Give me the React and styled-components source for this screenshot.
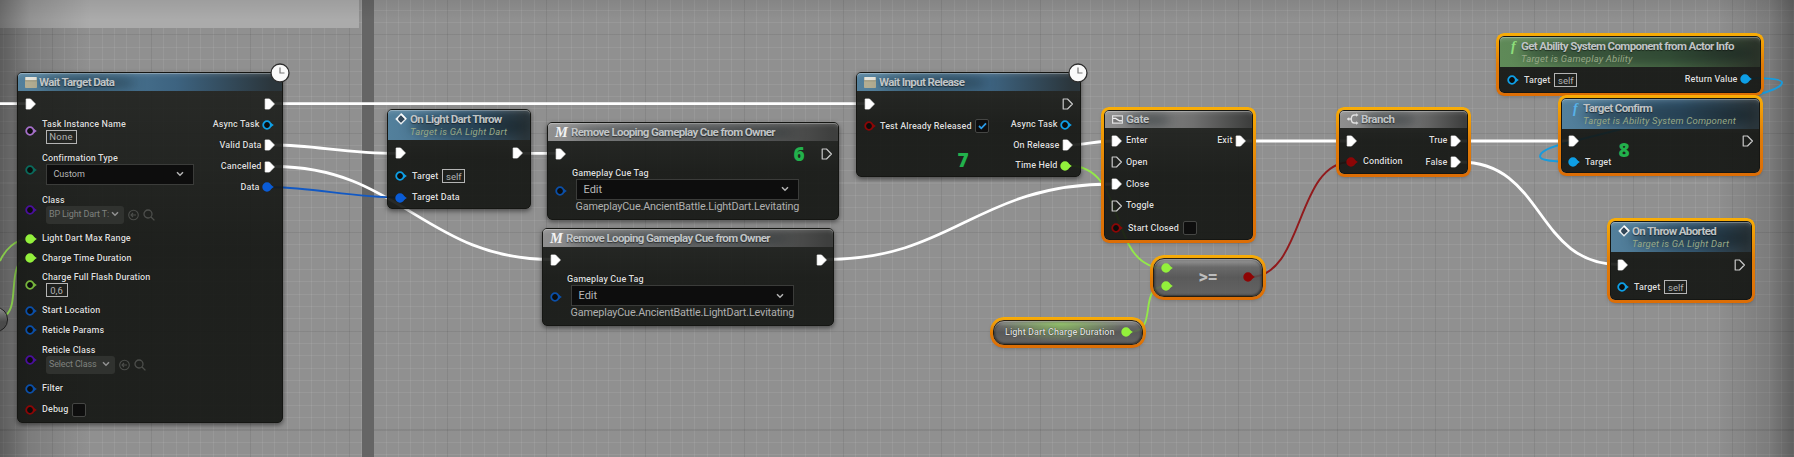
import React from "react";
import styled, { createGlobalStyle, css } from "styled-components";

const Global = createGlobalStyle`
  * { box-sizing: border-box; }
  body { margin: 0; background: #8e8e8e; overflow: hidden; }
`;

const C = {
  object: "#0e9fe6",
  name: "#a56fc9",
  enumeration: "#0a6a5c",
  klass: "#4a0f9c",
  float: "#93f03c",
  struct: "#0b4fa8",
  data: "#0a5cd6",
  bool: "#8c0606",
};

/* ---------- canvas ---------- */

const Canvas = styled.main`
  position: relative;
  width: 1794px;
  height: 457px;
  overflow: hidden;
  font-family: Roboto, "Liberation Sans", sans-serif;
  color: #dcdcdc;
  background-color: #909090;
  background-image:
    repeating-linear-gradient(90deg, rgba(60, 60, 60, 0.2) 0 1px, transparent 1px 98.8px),
    repeating-linear-gradient(180deg, rgba(60, 60, 60, 0.2) 0 1px, transparent 1px 98.8px),
    repeating-linear-gradient(90deg, rgba(255, 255, 255, 0.075) 0 1px, transparent 1px 12.35px),
    repeating-linear-gradient(180deg, rgba(255, 255, 255, 0.075) 0 1px, transparent 1px 12.35px);
  background-position: -46.7px -64.5px;
  background-size: 1900px 600px;
`;

const CommentBar = styled.div`
  position: absolute;
  left: 0;
  top: 0;
  width: 358.5px;
  height: 28px;
  background: #ababab;
`;

const CommentEdge = styled.div`
  position: absolute;
  left: 362px;
  top: 0;
  width: 12px;
  height: 100%;
  background: #656565;
`;

const Vignette = styled.div`
  position: absolute;
  inset: 0;
  background:
    linear-gradient(90deg, rgba(0, 0, 0, 0.36), rgba(0, 0, 0, 0.14) 30px, rgba(0, 0, 0, 0) 90px),
    linear-gradient(270deg, rgba(0, 0, 0, 0.34), rgba(0, 0, 0, 0.14) 25px, rgba(0, 0, 0, 0) 80px),
    linear-gradient(180deg, rgba(0, 0, 0, 0.08), rgba(0, 0, 0, 0) 20px);
`;

const Wires = styled.svg`
  position: absolute;
  inset: 0;
  fill: none;
  stroke-width: 2.8;
  stroke: #fff;
`;

/* ---------- nodes ---------- */

const ring = css`
  &::before {
    content: "";
    position: absolute;
    inset: -4px;
    padding: 3px;
    border-radius: ${(p) => (p.$round || 5) + 3}px;
    background: linear-gradient(#f9ae06, #e07c08 50%, #dc6d05);
    mask: linear-gradient(#000 0 0) content-box exclude, linear-gradient(#000 0 0);
    pointer-events: none;
  }
`;

const Node = styled.section`
  position: absolute;
  left: ${(p) => p.$x}px;
  top: ${(p) => p.$y}px;
  width: ${(p) => p.$w}px;
  height: ${(p) => p.$h}px;
  border: 1px solid #151613;
  border-radius: ${(p) => p.$round || 5}px;
  background: linear-gradient(rgba(28, 30, 27, 0.89), rgba(19, 21, 18, 0.91) 50%);
  box-shadow: 0 2px 5px rgba(0, 0, 0, 0.5);
  ${(p) => p.$selected && ring}
`;

const tones = {
  blue: "linear-gradient(90deg, #53809c, #4a7592 35%, #3d6380 60%, #2b363c 96%)",
  grey: "linear-gradient(90deg, #8f8f8f, #7c7c7c 40%, #707070 60%, #3e3f3e 98%)",
  green: "linear-gradient(90deg, #5f8a58, #587d51 45%, #4d7048 65%, #2c352a 98%)",
};

const Header = styled.header`
  position: relative;
  display: flex;
  align-items: flex-start;
  height: ${(p) => p.$h}px;
  padding: ${(p) => p.$top ?? 2}px 0 0 7px;
  border-radius: 4px 4px 0 0;
  background: ${(p) => tones[p.$tone]};
  box-shadow: inset 0 1px 0 rgba(255, 255, 255, 0.28), inset 0 5px 4px -3px rgba(255, 255, 255, 0.16);
  overflow: hidden;
`;

const HeaderIcon = styled.span`
  position: relative;
  display: flex;
  flex: none;
  width: ${(p) => p.$w || 14}px;
  height: 14px;
  align-items: center;
`;

const Heading = styled.div`
  position: relative;
  display: flex;
  flex-direction: column;
  isolation: isolate;
  &::before {
    content: "";
    position: absolute;
    z-index: -1;
    inset: 1px -22px -1px 0;
    border-radius: 50%;
    background: rgba(8, 18, 24, 0.42);
    filter: blur(6px);
  }
`;

const Title = styled.h2`
  margin: 0;
  font-size: 11.5px;
  line-height: 14px;
  font-weight: 700;
  letter-spacing: ${(p) => p.$ls ?? -0.62}px;
  color: #c0c4c6;
  white-space: nowrap;
  text-shadow: 0 1px 1px rgba(0, 0, 0, 0.5);
`;

const Subtitle = styled.p`
  margin: 0;
  font-size: 9.5px;
  line-height: 12px;
  font-style: italic;
  letter-spacing: 0.2px;
  color: #98a987;
  white-space: nowrap;
`;

const Body = styled.div`
  display: flex;
  justify-content: space-between;
`;

const Column = styled.div`
  display: flex;
  flex-direction: column;
  padding-left: ${(p) => p.$left || 0}px;
  padding-right: ${(p) => p.$right || 0}px;
`;

const Row = styled.div`
  display: flex;
  align-items: center;
  justify-content: ${(p) => (p.$end ? "flex-end" : "flex-start")};
  height: ${(p) => p.$h}px;
`;

const Label = styled.span`
  font-size: 9px;
  line-height: 11px;
  font-weight: 500;
  letter-spacing: 0.1px;
  color: #dedede;
  white-space: nowrap;
  text-shadow: 0 0 1px rgba(0, 0, 0, 0.8);
  margin: 0 ${(p) => p.$gap || 0}px 0 ${(p) => p.$indent || 0}px;
`;

const Field = styled.div`
  display: flex;
  flex-direction: column;
  align-items: flex-start;
  margin-left: 5px;
  padding-bottom: ${(p) => p.$lift || 0}px;
`;

const TextBox = styled.span`
  display: flex;
  align-items: center;
  justify-content: center;
  width: ${(p) => p.$w}px;
  height: 14px;
  margin-left: ${(p) => p.$ml ?? 3.5}px;
  border: 1px solid #b4b4b4;
  font-size: 9.5px;
  line-height: 11px;
  letter-spacing: ${(p) => p.$ls || 0}px;
  color: #b2b2b2;
`;

const Select = styled.div`
  display: flex;
  align-items: center;
  justify-content: space-between;
  width: ${(p) => p.$w}px;
  height: 21px;
  margin-left: 3.5px;
  padding: 0 9px 0 7px;
  border: 1px solid #3b3c3a;
  background: #0d0d0d;
  font-size: ${(p) => p.$size || 11}px;
  color: #b8b8b8;
`;

const ClassPicker = styled.div`
  display: flex;
  align-items: center;
  gap: 4px;
  margin-left: 4px;
  color: #4c4e4b;
`;

const ClassBox = styled.div`
  display: flex;
  align-items: center;
  justify-content: space-between;
  width: ${(p) => p.$w}px;
  height: 18.5px;
  padding: 0 5px 2px 3px;
  border-radius: 3px;
  background: #30322f;
  font-size: 9px;
  letter-spacing: -0.15px;
  color: #7f817e;
  white-space: nowrap;
`;

const CheckBox = styled.span`
  display: flex;
  align-items: center;
  justify-content: center;
  width: 14px;
  height: 14px;
  border: 1px solid #454644;
  border-radius: 2px;
  background: #0e0e0e;
`;

const TagValue = styled.span`
  margin-left: 3.5px;
  font-size: 10.8px;
  line-height: 14px;
  letter-spacing: -0.16px;
  color: #b0b0b0;
  white-space: nowrap;
`;

const Mark = styled.span`
  position: absolute;
  left: ${(p) => p.$x}px;
  top: ${(p) => p.$y}px;
  font: 800 19px/20px "Open Sans", sans-serif;
  color: #22b14c;
`;

const Badge = styled.svg`
  position: absolute;
  right: -8px;
  top: -10px;
`;

const Capsule = styled.section`
  position: absolute;
  left: ${(p) => p.$x}px;
  top: ${(p) => p.$y}px;
  width: ${(p) => p.$w}px;
  height: ${(p) => p.$h}px;
  display: flex;
  justify-content: space-between;
  align-items: center;
  border: 1px solid #2a2010;
  border-radius: ${(p) => p.$round}px;
  background:
    ${(p) => p.$glow && "radial-gradient(ellipse 62px 18px at 45% 12%, rgba(150,210,100,.75), transparent),"}
    linear-gradient(rgba(160, 160, 160, 0.85), rgba(98, 98, 98, 0.85) 22%, rgba(80, 80, 80, 0.85) 50%, rgba(92, 92, 92, 0.85));
  box-shadow: 0 2px 5px rgba(0, 0, 0, 0.4), inset 0 1px 1px rgba(255, 255, 255, 0.4), inset 0 0 2px 1px rgba(20, 20, 20, 0.6);
  ${ring}
`;

const Operator = styled.span`
  font: 700 18px/20px Roboto, sans-serif;
  color: #bdbdbd;
  letter-spacing: -0.4px;
`;

const Stub = styled.div`
  position: absolute;
  left: -30px;
  top: 307px;
  width: 38px;
  height: 25px;
  border: 1.5px solid #1d1d1d;
  border-radius: 12px;
  background: linear-gradient(#8a8a8a, #4a4a4a 60%);
`;

/* ---------- drawings ---------- */

const Glyph = styled.svg`
  flex: none;
  display: block;
`;

const OutSlot = styled.span`
  display: flex;
  margin-right: -1.5px;
`;

const Exec = ({ off }) => (
  <Glyph width="12" height="12" viewBox="0 0 12 12">
    <path
      d="M1.2 1h4.3L10.4 6 5.5 11H1.2z"
      fill={off ? "none" : "#fff"}
      stroke={off ? "#c9c9c9" : "#fff"}
      strokeWidth={off ? 1.2 : 0.8}
      strokeLinejoin="round"
    />
  </Glyph>
);

const Pin = ({ c, on }) => (
  <Glyph width="12" height="10" viewBox="0 0 12 10">
    <circle cx="5" cy="5" r="3.8" fill={on ? c : "#0c0d0c"} stroke={c} strokeWidth="1.8" />
    <path d="M9 3l2.8 2L9 7z" fill={c} />
  </Glyph>
);

const Chevron = ({ c = "#b5b5b5" }) => (
  <Glyph width="8" height="6" viewBox="0 0 8 6">
    <path d="M1 1.2l3 3 3-3" fill="none" stroke={c} strokeWidth="1.5" />
  </Glyph>
);

const BackIcon = () => (
  <Glyph width="11" height="12" viewBox="0 0 11 12">
    <g fill="none" stroke="currentColor" strokeWidth="1.1">
      <circle cx="5.5" cy="6" r="4.8" />
      <path d="M8 6H3.2M5 4L3 6l2 2" />
    </g>
  </Glyph>
);

const SearchIcon = () => (
  <Glyph width="12" height="12" viewBox="0 0 12 12">
    <g fill="none" stroke="currentColor" strokeWidth="1.3">
      <circle cx="5" cy="5" r="4" />
      <path d="M8 8l3.4 3.4" />
    </g>
  </Glyph>
);

const TaskIcon = () => (
  <Glyph width="12" height="12" viewBox="0 0 12 12">
    <rect x="0" y="1" width="12" height="11" rx="0.8" fill="#b3ad92" />
    <rect x="0.5" y="1" width="11" height="3.3" fill="#e6e5dc" />
    <path d="M0 4.8h12" stroke="#8d886f" strokeWidth="0.7" />
  </Glyph>
);

const EventIcon = () => (
  <Glyph width="12" height="12" viewBox="0 0 12 12">
    <path d="M6 1.2L10.8 6 6 10.8 1.2 6z" fill="#34485a" stroke="#eef2f4" strokeWidth="1.3" />
    <path d="M3.2 3.4L0.8 6l2.4 2.6z" fill="#eef2f4" />
    <path d="M6 0.8L11.2 6" stroke="#fff" strokeWidth="1.6" />
  </Glyph>
);

const MacroIcon = styled.i`
  font: italic 700 14.5px/14px "Liberation Serif", serif;
  color: #f4f4f4;
`;

const FnIcon = styled.i`
  padding-left: 4px;
  font: italic 700 14px/13px "Liberation Serif", serif;
  color: ${(p) => p.$c};
`;

const GateIcon = () => (
  <Glyph width="11" height="9" viewBox="0 0 11 9">
    <path d="M0.6 0.8h9.8v7.4H0.6z" fill="#777" stroke="#e2e2e2" strokeWidth="1.2" />
    <path d="M1 3.4h2.6l3.8 2.4H10" stroke="#f0f0f0" strokeWidth="1.4" fill="none" />
  </Glyph>
);

const BranchIcon = () => (
  <Glyph width="12" height="12" viewBox="0 0 12 12">
    <g fill="none" stroke="#e2e2e2" strokeWidth="1.4">
      <path d="M0.5 6h3.5M10 2H7.4C5.4 2 4.3 3.4 4.3 6s1.1 4 3.1 4H10" />
    </g>
    <path d="M9 0.2L11.6 2 9 3.8zM9 8.2l2.6 1.8L9 11.8zM2.2 4L0 6l2.2 2z" fill="#e2e2e2" />
  </Glyph>
);

const Clock = () => (
  <Badge width="20" height="20" viewBox="0 0 20 20">
    <circle cx="10" cy="10" r="9" fill="#fafafa" stroke="#2e2e2e" strokeWidth="1.3" />
    <path d="M10 4.5V10h4.5" fill="none" stroke="#777" strokeWidth="1.2" />
  </Badge>
);

/* ---------- node types ---------- */

const InRow = ({ h, label, c, on }) => (
  <Row $h={h}>
    <Pin c={c} on={on} />
    <Label $indent={5}>{label}</Label>
  </Row>
);

const ExecOut = ({ h, label, off }) => (
  <Row $h={h} $end>
    {label && <Label $gap={2}>{label}</Label>}
    <OutSlot><Exec off={off} /></OutSlot>
  </Row>
);

const OutRow = ({ h, label, c, on }) => (
  <Row $h={h} $end>
    <Label $gap={2.5}>{label}</Label>
    <Pin c={c} on={on} />
  </Row>
);

const ExecIn = ({ h, label, off }) => (
  <Row $h={h}>
    <Exec off={off} />
    {label && <Label $indent={3}>{label}</Label>}
  </Row>
);

const SelfRow = ({ h }) => (
  <Row $h={h}>
    <Pin c={C.object} />
    <Label $indent={5}>Target</Label>
    <TextBox $w={23} $ml={4}>self</TextBox>
  </Row>
);

const ClassField = ({ h, label, value, w }) => (
  <Row $h={h}>
    <Pin c={C.klass} />
    <Field>
      <Label>{label}</Label>
      <ClassPicker>
        <ClassBox $w={w}>
          {value}
          <Chevron c="#929292" />
        </ClassBox>
        <BackIcon />
        <SearchIcon />
      </ClassPicker>
    </Field>
  </Row>
);

const RemoveCue = ({ x, y, w, connected, mark }) => (
  <Node $x={x} $y={y} $w={w} $h={98}>
    <Header $h={18} $tone="grey">
      <HeaderIcon $w={16}><MacroIcon>M</MacroIcon></HeaderIcon>
      <Heading><Title>Remove Looping Gameplay Cue from Owner</Title></Heading>
    </Header>
    <Body>
      <Column $left={7}>
        <ExecIn h={26} />
        <Row $h={48}>
          <Pin c={C.struct} />
          <Field>
            <Label>Gameplay Cue Tag</Label>
            <Select $w={223}>
              Edit
              <Chevron />
            </Select>
            <TagValue>GameplayCue.AncientBattle.LightDart.Levitating</TagValue>
          </Field>
        </Row>
      </Column>
      <Column $right={6.5}>
        <ExecOut h={26} off={!connected} />
      </Column>
    </Body>
    {mark}
  </Node>
);

export default function App() {
  return (
    <Canvas>
      <Global />
      <CommentBar />
      <CommentEdge />
      <Vignette />
      <Wires width="1794" height="457">
        <path d="M0 103.7H27M274 103.7H866M521 153.3H557M1245 141H1348M1460 141H1570" />
        <path d="M274 145C315 145 345 153.3 397 153.3" />
        <path d="M274 166.5C400 166.5 425 259.5 552 259.5" />
        <path d="M825 259.5C955 259.5 975 184 1113 184" />
        <path d="M1071 145C1085 145 1095 141 1113 141" />
        <path d="M1460 162C1545 162 1535 264.5 1619 264.5" />
        <g strokeWidth="1.9">
          <path d="M272 187.3C315 187.3 350 197.5 400 197.5" stroke="#1259c4" />
          <path d="M29 239C15 239 5 250 0 261" stroke="#86c94a" />
          <path d="M29 258.3C6 258.3 20 305 6 315L0 319" stroke="#86c94a" />
          <path d="M1068 165.5C1130 165.5 1105 268.5 1166 268.5" stroke="#93e84a" />
          <path d="M1130 332C1160 332 1136 286 1166 286" stroke="#93e84a" />
          <path d="M1250 277C1305 277 1295 162 1351 162" stroke="#911a1c" />
          <path d="M1748 78C1768 78 1782 79 1782 82.5C1782 88 1767 92 1755 95.5L1566 143C1550 147 1540 151 1540 156.5C1540 161 1555 161.5 1573 162" stroke="#189bdc" />
        </g>
      </Wires>

      <Stub />

      <Node $x={17} $y={72} $w={266} $h={351}>
        <Header $h={18} $tone="blue">
          <HeaderIcon $w={14}><TaskIcon /></HeaderIcon>
          <Heading><Title>Wait Target Data</Title></Heading>
        </Header>
        <Body>
          <Column $left={7}>
            <ExecIn h={25} />
            <Row $h={30}>
              <Pin c={C.name} />
              <Field>
                <Label>Task Instance Name</Label>
                <TextBox $w={31} $ls={0.2}>None</TextBox>
              </Field>
            </Row>
            <Row $h={47}>
              <Pin c={C.enumeration} />
              <Field $lift={2}>
                <Label>Confirmation Type</Label>
                <Select $w={148} $size={9}>
                  Custom
                  <Chevron />
                </Select>
              </Field>
            </Row>
            <ClassField h={33} label="Class" value="BP Light Dart T:" w={78} />
            <InRow h={25} label="Light Dart Max Range" c={C.float} on />
            <InRow h={14.5} label="Charge Time Duration" c={C.float} on />
            <Row $h={38}>
              <Pin c="#76b53c" />
              <Field>
                <Label>Charge Full Flash Duration</Label>
                <TextBox $w={22}>0,6</TextBox>
              </Field>
            </Row>
            <InRow h={14.5} label="Start Location" c={C.struct} />
            <InRow h={24.5} label="Reticle Params" c={C.struct} />
            <ClassField h={34} label="Reticle Class" value="Select Class" w={69} />
            <InRow h={24.5} label="Filter" c={C.struct} />
            <Row $h={17}>
              <Pin c={C.bool} />
              <Label $indent={5} $gap={4}>Debug</Label>
              <CheckBox />
            </Row>
          </Column>
          <Column $right={8}>
            <ExecOut h={25} />
            <OutRow h={17} label="Async Task" c={C.object} />
            <ExecOut h={24} label="Valid Data" />
            <ExecOut h={19} label="Cancelled" />
            <OutRow h={22.5} label="Data" c={C.data} on />
          </Column>
        </Body>
        <Clock />
      </Node>

      <Node $x={387} $y={109} $w={144} $h={100}>
        <Header $h={30} $tone="blue">
          <HeaderIcon $w={15}><EventIcon /></HeaderIcon>
          <Heading>
            <Title>On Light Dart Throw</Title>
            <Subtitle>Target is GA Light Dart</Subtitle>
          </Heading>
        </Header>
        <Body>
          <Column $left={7}>
            <ExecIn h={26} />
            <SelfRow h={20} />
            <InRow h={23} label="Target Data" c={C.data} on />
          </Column>
          <Column $right={8}><ExecOut h={26} /></Column>
        </Body>
      </Node>

      <RemoveCue x={547} y={121.5} w={292} mark={<Mark $x={245.5} $y={21.5}>6</Mark>} />
      <RemoveCue x={542} y={228} w={292} connected />

      <Node $x={856} $y={72} $w={225} $h={105}>
        <Header $h={18} $tone="blue">
          <HeaderIcon $w={15}><TaskIcon /></HeaderIcon>
          <Heading><Title>Wait Input Release</Title></Heading>
        </Header>
        <Body>
          <Column $left={7}>
            <ExecIn h={25} />
            <Row $h={20}>
              <Pin c={C.bool} />
              <Label $indent={4} $gap={3.5}>Test Already Released</Label>
              <CheckBox>
                <Glyph width="9" height="8" viewBox="0 0 9 8">
                  <path d="M1 4l2.3 2.3L8 1.4" fill="none" stroke="#2b9be8" strokeWidth="1.8" />
                </Glyph>
              </CheckBox>
            </Row>
          </Column>
          <Column $right={8}>
            <ExecOut h={25} off />
            <OutRow h={17} label="Async Task" c={C.object} />
            <ExecOut h={24} label="On Release" />
            <OutRow h={17} label="Time Held" c={C.float} on />
          </Column>
        </Body>
        <Mark $x={100.5} $y={76.5}>7</Mark>
        <Clock />
      </Node>

      <Node $x={1104} $y={110} $w={149} $h={130} $selected>
        <Header $h={17} $tone="grey" $top={1}>
          <HeaderIcon $w={14}><GateIcon /></HeaderIcon>
          <Heading><Title $ls={-0.3}>Gate</Title></Heading>
        </Header>
        <Body>
          <Column $left={6}>
            <ExecIn h={25} label="Enter" />
            <ExecIn h={18.5} label="Open" off />
            <ExecIn h={25} label="Close" />
            <ExecIn h={18.5} label="Toggle" off />
            <Row $h={26}>
              <Pin c={C.bool} />
              <Label $indent={5} $gap={4}>Start Closed</Label>
              <CheckBox />
            </Row>
          </Column>
          <Column $right={7}><ExecOut h={25} label="Exit" /></Column>
        </Body>
      </Node>

      <Node $x={1339} $y={110} $w={129} $h={64} $selected>
        <Header $h={17} $tone="grey" $top={1}>
          <HeaderIcon $w={14}><BranchIcon /></HeaderIcon>
          <Heading><Title $ls={-0.5}>Branch</Title></Heading>
        </Header>
        <Body>
          <Column $left={6}>
            <ExecIn h={25} />
            <InRow h={17} label="Condition" c={C.bool} on />
          </Column>
          <Column $right={7}>
            <ExecOut h={25} label="True" />
            <ExecOut h={18} label="False" />
          </Column>
        </Body>
      </Node>

      <Node $x={1499} $y={36} $w={262} $h={57} $selected>
        <Header $h={30} $tone="green">
          <HeaderIcon $w={14}><FnIcon $c="#8fe07c">f</FnIcon></HeaderIcon>
          <Heading>
            <Title>Get Ability System Component from Actor Info</Title>
            <Subtitle>Target is Gameplay Ability</Subtitle>
          </Heading>
        </Header>
        <Body>
          <Column $left={7}><SelfRow h={26} /></Column>
          <Column $right={8}><OutRow h={24} label="Return Value" c={C.object} on /></Column>
        </Body>
      </Node>

      <Node $x={1561} $y={98} $w={199} $h={75} $selected>
        <Header $h={30} $tone="blue">
          <HeaderIcon $w={14}><FnIcon $c="#58b4ea">f</FnIcon></HeaderIcon>
          <Heading>
            <Title>Target Confirm</Title>
            <Subtitle>Target is Ability System Component</Subtitle>
          </Heading>
        </Header>
        <Body>
          <Column $left={6}>
            <ExecIn h={24} />
            <InRow h={18} label="Target" c={C.object} on />
          </Column>
          <Column $right={7}><ExecOut h={24} off /></Column>
        </Body>
        <Mark $x={56.5} $y={41}>8</Mark>
      </Node>

      <Node $x={1610} $y={221} $w={142} $h={79} $selected>
        <Header $h={30} $tone="blue">
          <HeaderIcon $w={14}><EventIcon /></HeaderIcon>
          <Heading>
            <Title>On Throw Aborted</Title>
            <Subtitle>Target is GA Light Dart</Subtitle>
          </Heading>
        </Header>
        <Body>
          <Column $left={6}>
            <ExecIn h={25} />
            <SelfRow h={20} />
          </Column>
          <Column $right={7}><ExecOut h={25} off /></Column>
        </Body>
      </Node>

      <Capsule $x={1153} $y={257.5} $w={110} $h={39} $round={11}>
        <Column $left={7}>
          <Row $h={17.5}><Pin c={C.float} on /></Row>
          <Row $h={17.5}><Pin c={C.float} on /></Row>
        </Column>
        <Operator>&gt;=</Operator>
        <Column $right={7}><Row $h={17}><Pin c="#8e0404" on /></Row></Column>
      </Capsule>

      <Capsule $x={993} $y={319.5} $w={150} $h={25} $round={11} $glow>
        <Column $left={11}><Label>Light Dart Charge Duration</Label></Column>
        <Column $right={9}><Pin c={C.float} on /></Column>
      </Capsule>
    </Canvas>
  );
}
